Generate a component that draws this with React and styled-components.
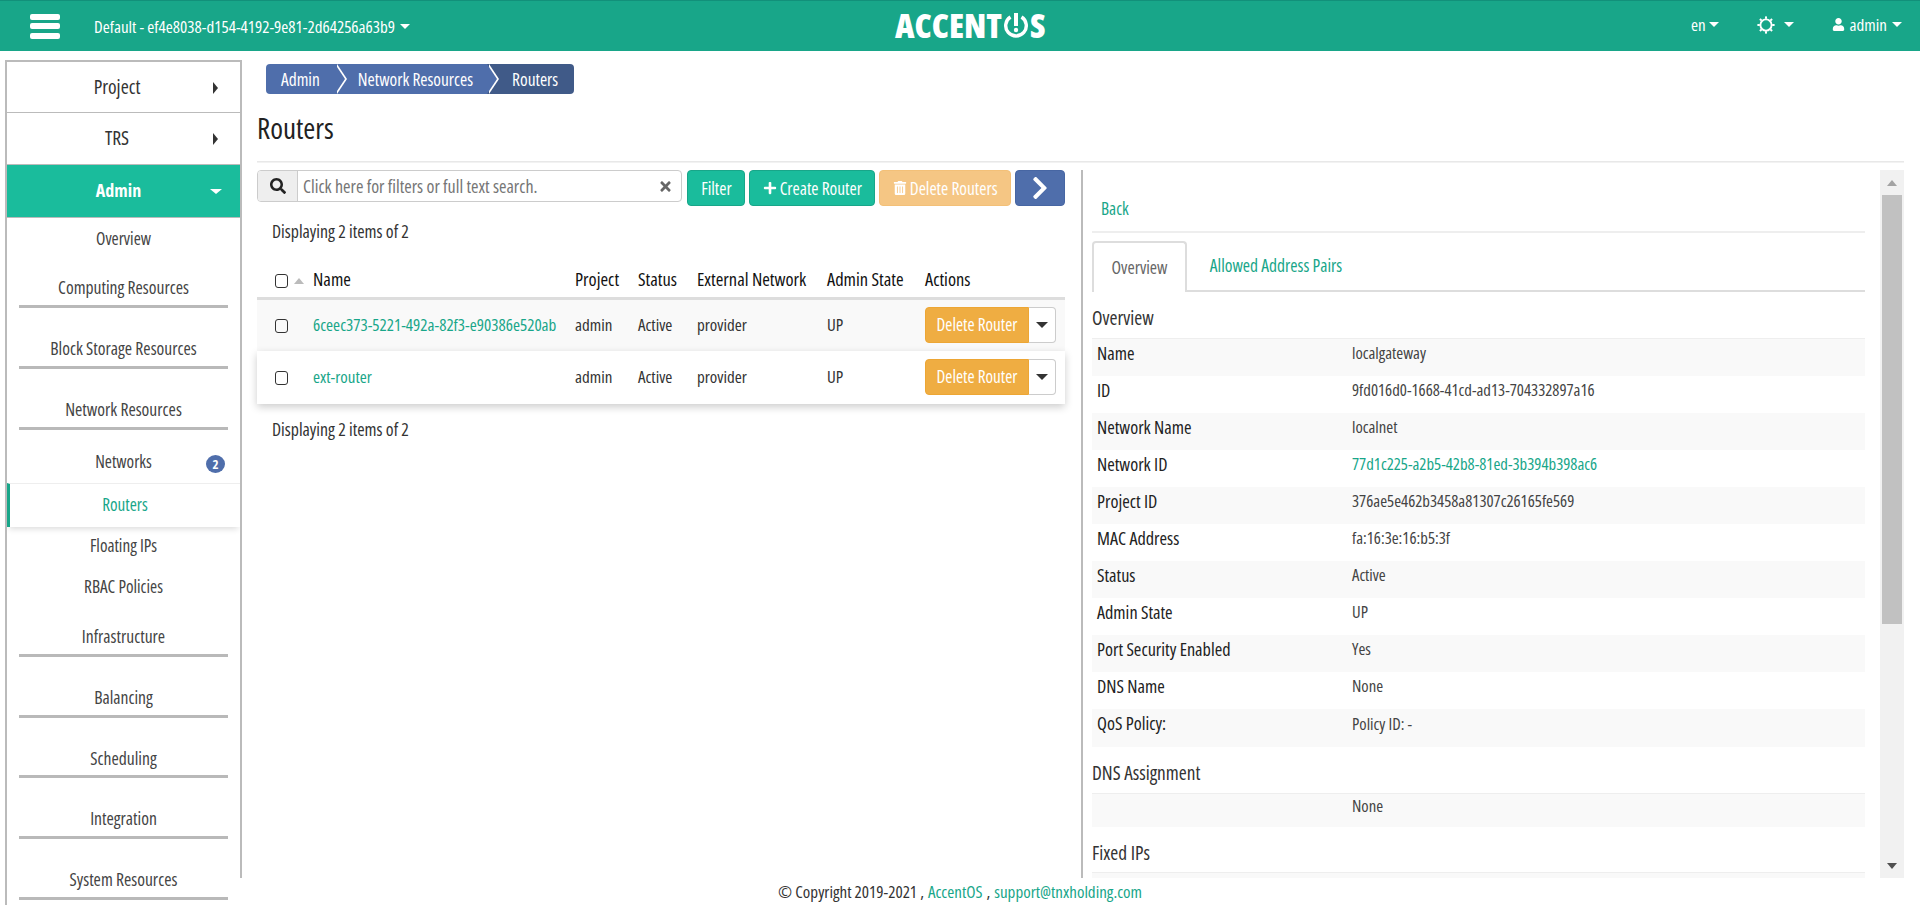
import React from 'react';
import styled, { createGlobalStyle } from 'styled-components';
import { FaSearch, FaTimes, FaPlus, FaTrashAlt, FaChevronRight, FaUser } from 'react-icons/fa';

const Global = createGlobalStyle`
  html, body { margin: 0; height: 905px; overflow: hidden; background: #fff; }
  body { font-family: "Open Sans", Roboto, sans-serif; font-stretch: 75%; font-size: 17px; color: #333; }
  * { box-sizing: border-box; }
`;

const Page = styled.div`position: relative; width: 1920px; height: 905px; overflow: hidden; display: flex; flex-direction: column;`;
const TopBar = styled.header`height: 51px; flex: none; background: #18a689; border-top: 1px solid #12907a; display: flex; align-items: center; position: relative; color: #fff; padding-left: 30px;`;
const Burger = styled.div`width: 30px; height: 25px; display: flex; flex-direction: column; justify-content: space-between;
  span { display: block; height: 6px; border-radius: 2px; background: #fff; }`;
const ProjectPick = styled.div`margin-left: 34px; font-size: 17px; display: flex; align-items: center; gap: 5px; color: #fff;`;
const Caret = styled.span`display: inline-block; width: 0; height: 0; border-left: ${p => p.$s || 5}px solid transparent; border-right: ${p => p.$s || 5}px solid transparent; border-top: ${p => p.$s || 5}px solid ${p => p.$c || '#fff'};`;
const Logo = styled.div`position: absolute; left: 895px; top: 9px; height: 30px; display: flex; align-items: center; font-weight: 800; font-size: 34px; color: #fff;
  svg { margin: 0 1px; }`;
const Right = styled.div`margin-left: auto; display: flex; align-items: center; font-size: 17px; padding: 0 18px 3px 0;`;
const RightItem = styled.div`display: flex; align-items: center; gap: ${p => p.$gap || 3}px; margin-left: ${p => p.$ml || 0}px;`;

const Body = styled.div`flex: 1; display: flex; min-height: 0;`;
const Side = styled.nav`width: 237px; margin: 9px 0 0 5px; flex: none; border-top: 2px solid #bbb; border-left: 2px solid #bbb; border-right: 2px solid #bbb; overflow: hidden; display: flex; flex-direction: column;`;
const TopItem = styled.div`height: ${p => p.$h || 52}px; flex: none; display: flex; align-items: center; position: relative; justify-content: center; padding: 0 ${p => p.$active ? 10 : 13}px 2px 0; font-size: ${p => p.$active ? 18 : 19.5}px; font-weight: ${p => p.$active ? 700 : 400}; color: ${p => p.$active ? '#fff' : '#333'}; background: ${p => p.$active ? '#1abc9c' : '#fff'}; border-bottom: 1px solid #bbb;`;
const ArrowRight = styled.span`position: absolute; left: 206px; top: 20px; width: 0; height: 0; border-top: 6px solid transparent; border-bottom: 6px solid transparent; border-left: 5px solid #333;`;
const ArrowDown = styled.span`position: absolute; left: 203px; top: 24px; width: 0; height: 0; border-left: 6px solid transparent; border-right: 6px solid transparent; border-top: 5px solid #fff;`;
const LinkItem = styled.div`height: ${p => p.$h}px; flex: none; padding-top: ${p => p.$top}px; text-align: center; line-height: 18px; font-size: 17.2px; color: #444; position: relative;`;
const CurrentItem = styled.div`height: 44px; flex: none; display: flex; align-items: center; justify-content: center; padding: 0 0 3px 0; color: #18a689; background: #fff; border-top: 1px solid #eee; border-left: 3px solid #18a689; box-shadow: 0 4px 6px -2px rgba(0,0,0,.14); position: relative; font-size: 17.2px;`;
const Badge = styled.span`position: absolute; left: 199px; top: 25px; width: 19px; height: 18px; border-radius: 50%; background: #4f6eab; color: #fff; font-size: 13px; font-weight: 700; display: flex; align-items: center; justify-content: center;`;
const GroupItem = styled.div`height: ${p => p.$h || 61}px; flex: none; margin: 0 12px; padding-top: 31px; text-align: center; line-height: 18px; font-size: 17.6px; color: #444; border-bottom: 3px solid #b9b9b9;`;

const Main = styled.main`flex: 1; min-width: 0; display: flex; flex-direction: column; padding: 13px 16px 0 15px;`;
const Crumbs = styled.div`display: flex; height: 30px; margin-left: 9px; font-size: 17.4px; color: #fff;`;
const Crumb = styled.div`height: 30px; display: flex; align-items: center; position: relative; padding: ${p => p.$pad}; background: ${p => p.$last ? '#405a88' : '#4f6eab'}; border-radius: ${p => p.$r};
  ${p => p.$arrow ? `&::after { content: ''; position: absolute; right: -10px; top: 0; z-index: 2; width: 0; height: 0; border-top: 15px solid transparent; border-bottom: 15px solid transparent; border-left: 10px solid #4f6eab; filter: drop-shadow(2px 0 0 #fff); }` : ''}`;
const Title = styled.h1`margin: 19px 0 0 0; height: 48px; font-size: 29px; font-weight: 400; line-height: 30px; color: #222;`;
const Rule = styled.div`flex: none; background: #e8e8e8; border-bottom: 1px solid #f2f2f2; height: 2px;`;
const Split = styled.div`display: flex; margin-top: 7px; height: 708px; flex: none;`;
const Left = styled.section`width: 808px; flex: none;`;
const Toolbar = styled.div`display: flex; align-items: flex-start; gap: 4px;`;
const Search = styled.div`width: 426px; height: 32px; margin-right: 1px; display: flex; border: 1px solid #ccc; border-radius: 4px; overflow: hidden; align-items: center;`;
const SearchIcon = styled.div`width: 40px; height: 100%; background: #eee; border-right: 1px solid #ccc; display: flex; align-items: center; justify-content: center; font-size: 16px; color: #222;`;
const SearchText = styled.div`flex: 1; padding-left: 5px; color: #757575; font-size: 18px;`;
const Clear = styled.div`width: 25px; display: flex; color: #666; font-size: 15px; padding-left: 2px;`;
const Btn = styled.div`height: 36px; width: ${p => p.$w}px; border-radius: 4px; display: flex; align-items: center; justify-content: center; gap: 3px; color: #fff; font-size: 17.4px; background: ${p => p.$bg}; border: 1px solid ${p => p.$bd};`;
const Info = styled.div`margin: 16px 0 0 15px; line-height: 18px; height: 18px; color: #333; font-size: 17.8px;`;
const Table = styled.table`border-collapse: collapse; table-layout: fixed; width: 808px; margin-top: 29px;`;
const Th = styled.th`height: 29px; padding: 0 0 8px 7px; text-align: left; font-weight: 500; font-size: 18.4px; line-height: 18px; color: #111; border-bottom: 3px solid #ddd;`;
const Row = styled.tr`height: ${p => p.$h}px; background: ${p => p.$bg}; box-shadow: ${p => p.$shadow ? '0 3px 8px rgba(0,0,0,.2)' : 'none'}; position: relative;`;
const Td = styled.td`padding: 0 0 1px 7px; color: #333; white-space: nowrap; font-size: 17px; line-height: 20px;`;
const Box = styled.span`display: inline-block; width: 13px; height: 14px; border: 1.5px solid #333; border-radius: 3px; vertical-align: middle; margin-left: 11px; margin-right: ${p => p.$mr || 0}px;`;
const SortUp = styled.span`display: inline-block; width: 0; height: 0; border-left: 5px solid transparent; border-right: 5px solid transparent; border-bottom: 6px solid #bbb; vertical-align: middle;`;
const RowLink = styled.a`color: #18a689; text-decoration: none;`;
const ActionGroup = styled.div`display: inline-flex; height: 36px; vertical-align: middle;`;
const ActionBtn = styled.div`width: 104px; background: #efad42; border: 1px solid #eda634; border-radius: 4px 0 0 4px; color: #fff; font-size: 17.2px; display: flex; align-items: center; justify-content: center;`;
const ActionCaret = styled.div`width: 27px; background: #fff; border: 1px solid #ccc; border-left: none; border-radius: 0 4px 4px 0; display: flex; align-items: center; justify-content: center;`;

const Detail = styled.section`flex: 1; min-width: 0; margin-left: 16px; border-left: 2px solid #bbb; display: flex;`;
const DetailBody = styled.div`flex: 1; min-width: 0; overflow: hidden; padding-left: 9px;`;
const BackRow = styled.div`height: 63px; border-bottom: 2px solid #eee; padding: 30px 0 0 9px; line-height: 18px; color: #18a689; font-size: 17.2px;`;
const Tabs = styled.div`display: flex; margin-top: 8px; height: 51px; border-bottom: 2px solid #ddd; font-size: 17.5px;`;
const Tab = styled.div`height: ${p => p.$active ? 51 : 49}px; width: ${p => p.$w}px; display: flex; align-items: center; justify-content: center; color: ${p => p.$active ? '#666' : '#18a689'}; background: #fff; padding-bottom: 2px; ${p => p.$active ? 'border: 2px solid #ddd; border-bottom: none; border-radius: 4px 4px 0 0;' : ''}`;
const Heading = styled.h3`margin: ${p => p.$top}px 0 0; font-weight: 500; font-size: 19.3px; line-height: 20px; height: ${p => p.$h}px; color: #333;`;
const KV = styled.div`border-top: 1px solid #eee;`;
const KVRow = styled.div`height: ${p => p.$h || 37}px; display: grid; grid-template-columns: 255px 1fr; align-items: center; padding: 0 0 10px 5px; background: ${p => p.$odd ? '#f9f9f9' : '#fff'}; font-size: 17px;`;
const Key = styled.div`color: #222; font-weight: 500; font-size: 18.2px;`;
const Val = styled.div`color: #444; font-size: 16.7px;`;
const ValLink = styled.a`color: #18a689;`;

const Scroll = styled.div`width: 24px; margin-left: 15px; flex: none; background: #f1f1f1; display: flex; flex-direction: column; align-items: center;`;
const ScrollEnd = styled.div`height: 25px; flex: none; display: flex; align-items: center; justify-content: center;`;
const Thumb = styled.div`width: 20px; height: 429px; background: #c1c1c1; flex: none;`;
const ScrollGap = styled.div`flex: 1;`;
const ScrollUp = styled.span`width: 0; height: 0; border-left: 5px solid transparent; border-right: 5px solid transparent; border-bottom: 6px solid #a3a3a3;`;
const ScrollDown = styled.span`width: 0; height: 0; border-left: 5px solid transparent; border-right: 5px solid transparent; border-top: 6px solid #505050;`;

const Foot = styled.footer`position: absolute; left: 240px; right: 0; top: 878px; height: 27px; background: #fff; display: flex; justify-content: center; align-items: center; padding-right: 240px; font-size: 17px; color: #333; gap: 4px;
  a { color: #18a689; }`;

const rows = [
  ['Name', 'localgateway'],
  ['ID', '9fd016d0-1668-41cd-ad13-704332897a16'],
  ['Network Name', 'localnet'],
  ['Network ID', '77d1c225-a2b5-42b8-81ed-3b394b398ac6', true],
  ['Project ID', '376ae5e462b3458a81307c26165fe569'],
  ['MAC Address', 'fa:16:3e:16:b5:3f'],
  ['Status', 'Active'],
  ['Admin State', 'UP'],
  ['Port Security Enabled', 'Yes'],
  ['DNS Name', 'None'],
  ['QoS Policy:', 'Policy ID: -'],
];

const Power = () => (
  <svg width="26" height="26" viewBox="0 0 26 26" fill="none">
    <path d="M7.5 5 A10.3 10.3 0 1 0 18.5 5" stroke="#fff" strokeWidth="3.4" />
    <rect x="11" y="1" width="4" height="13" fill="#fff" />
    <circle cx="13" cy="18" r="2.2" fill="#fff" />
  </svg>
);

const SunRing = () => (
  <svg width="18" height="18" viewBox="0 0 18 18" fill="#fff">
    <circle cx="9" cy="9" r="5.6" fill="none" stroke="#fff" strokeWidth="1.9" />
    {[0, 45, 90, 135, 180, 225, 270, 315].map(a => (
      <rect key={a} x="8" y="0.4" width="2" height="2.4" transform={`rotate(${a} 9 9)`} />
    ))}
  </svg>
);

const TableRow = ({ name, bg, shadow, h }) => (
  <Row $bg={bg} $shadow={shadow} $h={h}>
    <Td><Box /></Td>
    <Td><RowLink>{name}</RowLink></Td>
    <Td>admin</Td>
    <Td>Active</Td>
    <Td>provider</Td>
    <Td>UP</Td>
    <Td>
      <ActionGroup>
        <ActionBtn>Delete Router</ActionBtn>
        <ActionCaret><Caret $s={6} $c="#333" /></ActionCaret>
      </ActionGroup>
    </Td>
  </Row>
);

export default function App() {
  return (
    <Page>
      <Global />
      <TopBar>
        <Burger><span /><span /><span /></Burger>
        <ProjectPick>Default - ef4e8038-d154-4192-9e81-2d64256a63b9 <Caret /></ProjectPick>
        <Logo>ACCENT<Power />S</Logo>
        <Right>
          <RightItem>en <Caret /></RightItem>
          <RightItem $ml={38} $gap={9}><SunRing /><Caret /></RightItem>
          <RightItem $ml={38} $gap={5}><FaUser size={13} /> admin <Caret /></RightItem>
        </Right>
      </TopBar>
      <Body>
        <Side>
          <TopItem $h={51}>Project<ArrowRight /></TopItem>
          <TopItem>TRS<ArrowRight /></TopItem>
          <TopItem $active $h={53}>Admin<ArrowDown /></TopItem>
          <LinkItem $h={29} $top={12}>Overview</LinkItem>
          <GroupItem>Computing Resources</GroupItem>
          <GroupItem>Block Storage Resources</GroupItem>
          <GroupItem>Network Resources</GroupItem>
          <LinkItem $h={53} $top={23}>Networks<Badge>2</Badge></LinkItem>
          <CurrentItem>Routers</CurrentItem>
          <LinkItem $h={40} $top={10}>Floating IPs</LinkItem>
          <LinkItem $h={29} $top={11}>RBAC Policies</LinkItem>
          <GroupItem>Infrastructure</GroupItem>
          <GroupItem>Balancing</GroupItem>
          <GroupItem $h={60}>Scheduling</GroupItem>
          <GroupItem>Integration</GroupItem>
          <GroupItem>System Resources</GroupItem>
        </Side>
        <Main>
          <Crumbs>
            <Crumb $pad="0 15px 0 15px" $r="4px 0 0 4px" $arrow>Admin</Crumb>
            <Crumb $pad="0 14px 0 23px" $arrow>Network Resources</Crumb>
            <Crumb $pad="0 16px 0 25px" $r="0 4px 4px 0" $last>Routers</Crumb>
          </Crumbs>
          <Title>Routers</Title>
          <Rule />
          <Split>
            <Left>
              <Toolbar>
                <Search>
                  <SearchIcon><FaSearch /></SearchIcon>
                  <SearchText>Click here for filters or full text search.</SearchText>
                  <Clear><FaTimes /></Clear>
                </Search>
                <Btn $w={58} $bg="#1abc9c" $bd="#18a689">Filter</Btn>
                <Btn $w={126} $bg="#1abc9c" $bd="#18a689"><FaPlus size={14} />Create Router</Btn>
                <Btn $w={132} $bg="#f5c684" $bd="#f3c078"><FaTrashAlt size={14} />Delete Routers</Btn>
                <Btn $w={50} $bg="#4f6eab" $bd="#4766a3"><FaChevronRight size={26} /></Btn>
              </Toolbar>
              <Info>Displaying 2 items of 2</Info>
              <Table>
                <colgroup>
                  <col width="49" /><col width="262" /><col width="63" /><col width="59" /><col width="130" /><col width="98" /><col width="147" />
                </colgroup>
                <thead>
                  <tr>
                    <Th><Box $mr={6} /><SortUp /></Th>
                    <Th>Name</Th>
                    <Th>Project</Th>
                    <Th>Status</Th>
                    <Th>External Network</Th>
                    <Th>Admin State</Th>
                    <Th>Actions</Th>
                  </tr>
                </thead>
                <tbody>
                  <TableRow name="6ceec373-5221-492a-82f3-e90386e520ab" bg="#f9f9f9" h={53} />
                  <TableRow name="ext-router" bg="#fff" shadow h={53} />
                </tbody>
              </Table>
              <Info>Displaying 2 items of 2</Info>
            </Left>
            <Detail>
              <DetailBody>
                <BackRow>Back</BackRow>
                <Tabs>
                  <Tab $active $w={95}>Overview</Tab>
                  <Tab $w={178}>Allowed Address Pairs</Tab>
                </Tabs>
                <Heading $top={16} $h={30}>Overview</Heading>
                <KV>
                  {rows.map(([k, v, link], i) => (
                    <KVRow key={k} $odd={i % 2 === 0} $h={i === 10 ? 38 : 37}>
                      <Key>{k}</Key>
                      <Val>{link ? <ValLink>{v}</ValLink> : v}</Val>
                    </KVRow>
                  ))}
                </KV>
                <Heading $top={16} $h={30}>DNS Assignment</Heading>
                <KV>
                  <KVRow $odd $h={33}><Key /><Val>None</Val></KVRow>
                </KV>
                <Heading $top={16} $h={29}>Fixed IPs</Heading>
                <KV><KVRow $odd /></KV>
              </DetailBody>
              <Scroll>
                <ScrollEnd><ScrollUp /></ScrollEnd>
                <Thumb />
                <ScrollGap />
                <ScrollEnd><ScrollDown /></ScrollEnd>
              </Scroll>
            </Detail>
          </Split>
        </Main>
      </Body>
      <Foot>© Copyright 2019-2021 , <a>AccentOS</a> , <a>support@tnxholding.com</a></Foot>
    </Page>
  );
}
